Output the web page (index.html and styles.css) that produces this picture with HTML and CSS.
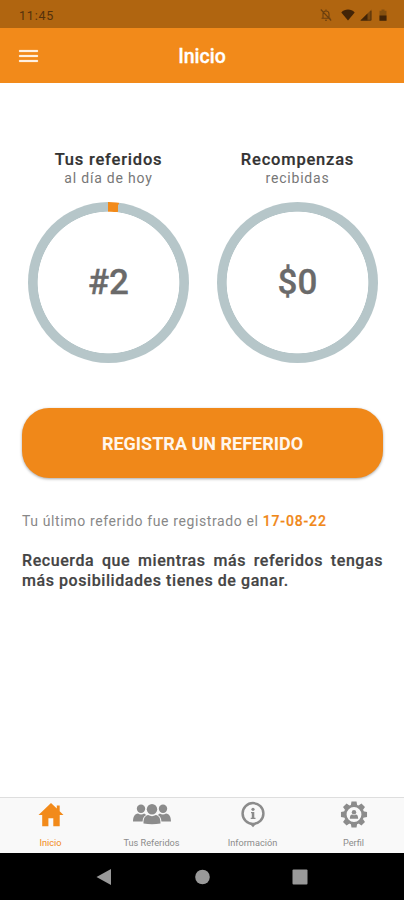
FILE: index.html
```html
<!DOCTYPE html>
<html lang="es">

<head>
    <meta charset="UTF-8">
    <meta name="viewport" content="width=device-width, initial-scale=1.0">
    <title>Inicio</title>
    <link rel="stylesheet" href="styles.css">
</head>

<body>
    <div class="app">
        <div class="status">
            <span class="time">11:45</span>
            <div class="status-icons">
                <svg width="12" height="14" viewBox="0 0 12 14" fill="none" stroke="#6b3f0e" stroke-width="1.1">
                    <path d="M3 10V6a3 3 0 0 1 6 0v4M1.5 10.2h9M5 12.3h2M6 3V1.5M.8 1.5l10.4 11" />
                </svg>
                <svg class="wifi" width="14" height="12" viewBox="0 0 14 12" fill="#422407">
                    <path d="M7 11.5L.3 3.4C2.200 1.500 4.400.6 7 .6s4.800.9 6.700 2.800z" />
                </svg>
                <svg class="signal" width="12" height="12" viewBox="0 0 12 12">
                    <path d="M.5 11.500L11.500.5v11z" fill="#7b480e" />
                    <path d="M.5 11.500L7.500 4.500v7z" fill="#422407" />
                    <path d="M10.900 2v9.200H.8" fill="none" stroke="#5a340b" />
                </svg>
                <svg class="battery" width="8" height="12" viewBox="0 0 8 12">
                    <path d="M2.500.5h3v1.200h2v10H.5v-10h2z" fill="#85500f" />
                    <path d="M.5 6.500h7v5.200h-7z" fill="#422407" />
                </svg>
            </div>
        </div>
        <header class="header">
            <div class="menu">
                <span></span>
                <span></span>
                <span></span>
            </div>
            <h1>Inicio</h1>
        </header>
        <main class="content">
            <div class="stats">
                <div class="stat">
                    <h2>Tus referidos</h2>
                    <p>al día de hoy</p>
                    <div class="ring ring-progress"><span>#2</span></div>
                </div>
                <div class="stat">
                    <h2>Recompenzas</h2>
                    <p>recibidas</p>
                    <div class="ring"><span>$0</span></div>
                </div>
            </div>
            <button class="register">REGISTRA UN REFERIDO</button>
            <p class="last">Tu último referido fue registrado el <b>17-08-22</b></p>
            <p class="note">Recuerda que mientras más referidos tengas más posibilidades tienes de ganar.</p>
        </main>
        <nav class="tabs">
            <a class="tab active">
                <svg width="26" height="28" viewBox="0 0 26 28" fill="currentColor">
                    <path d="M13 2L.5 14h3.700v11.300h6.200v-8h4.900v8h6.400V14h3.800l-3.800-3.700V4.500h-2.900v3z" />
                </svg>
                <span>Inicio</span>
            </a>
            <a class="tab">
                <svg width="40" height="28" viewBox="0 0 40 28" fill="currentColor">
                    <circle cx="9" cy="7.800" r="4.200" />
                    <circle cx="31" cy="7.800" r="4.200" />
                    <circle cx="20" cy="8.200" r="5.200" />
                    <path d="M1 20.500c.2-5 1.800-7.500 5-7.900 2 1.200 4.200 1.200 6.200 0l2 1.300c-2.400 1.300-3.400 3.300-3.600 6.600z" />
                    <path d="M39 20.500c-.2-5-1.800-7.500-5-7.900-2 1.200-4.200 1.200-6.200 0l-2 1.300c2.400 1.300 3.400 3.300 3.600 6.600z" />
                    <path d="M11.500 22.500c-.1-5 1.300-7.900 4.700-8.500 2.500 1.500 5.100 1.500 7.600 0 3.400.6 4.800 3.500 4.700 8.500q-8.500 1.600-17 0z" />
                </svg>
                <span>Tus Referidos</span>
            </a>
            <a class="tab">
                <svg width="26" height="28" viewBox="0 0 26 28" fill="currentColor">
                    <path d="M9.500 22.500l3.500 3.700 3.500-3.700z" />
                    <circle cx="13" cy="12.500" r="10.400" fill="none" stroke="currentColor" stroke-width="2.500" />
                    <circle cx="13" cy="8.300" r="1.600" />
                    <path d="M11 10.900h3.300v5.800h1.200v1.400h-4.800v-1.400h1.100v-4.400H11z" />
                </svg>
                <span>Información</span>
            </a>
            <a class="tab">
                <svg width="28" height="28" viewBox="-14.500 -14 29 29" fill="currentColor">
                    <g id="teeth">
                        <path d="M-3.300-9.500l.7-4h5.200l.7 4zM-3.300 9.500l.7 4h5.200l.7-4z" />
                        <path d="M-9.500-3.300l-4 .7v5.200l4 .7zM9.500-3.300l4 .7v5.200l-4 .7z" />
                    </g>
                    <use href="#teeth" transform="rotate(45)" />
                    <circle r="9.100" fill="none" stroke="currentColor" stroke-width="2.800" />
                    <circle cy="-2.300" r="2.300" />
                    <path d="M-4.300 4.400c0-3 .8-4.200 2.500-4.400Q0 1.500 1.800 0c1.700.2 2.500 1.400 2.500 4.400z" />
                </svg>
                <span>Perfil</span>
            </a>
        </nav>
        <div class="system">
            <svg width="16" height="18" viewBox="0 0 16 18">
                <path d="M.5 9L15 1v16z" />
            </svg>
            <svg width="16" height="18" viewBox="0 0 16 18">
                <circle cx="8.500" cy="9" r="7.300" />
            </svg>
            <svg width="16" height="18" viewBox="0 0 16 18">
                <rect x=".5" y="1.500" width="15" height="15" rx="1" />
            </svg>
        </div>
    </div>
</body>

</html>
```

FILE: styles.css
```css
* {
    margin: 0;
    padding: 0;
    box-sizing: border-box;
}

body {
    font-family: Roboto, "Liberation Sans", sans-serif;
    background-color: #fff;
}

.app {
    display: flex;
    flex-direction: column;
    height: 900px;
}

.status {
    display: flex;
    justify-content: space-between;
    align-items: center;
    height: 28px;
    padding: 1px 17px 0 19px;
    background-color: #b06510;
}

.time {
    padding-top: 2px;
    font-size: 12.5px;
    letter-spacing: 0.8px;
    color: #54310c;
}

.status-icons {
    display: flex;
    align-items: center;
}

.wifi {
    margin-left: 9px;
}

.signal {
    margin-left: 5px;
}

.battery {
    margin-left: 7px;
}

.header {
    display: grid;
    grid-template-columns: 38px 1fr 38px;
    align-items: center;
    height: 55px;
    padding-top: 2px;
    background-color: #f28a1a;
}

.menu {
    display: flex;
    flex-direction: column;
    gap: 3px;
    width: 19px;
    margin: -1px 0 0 19px;
}

.menu span {
    height: 2px;
    border-radius: 1px;
    background-color: #fff0e0;
    box-shadow: 0 0 1px #fff0e0;
}

.header h1 {
    padding-top: 1px;
    font-size: 19.5px;
    font-weight: 500;
    line-height: 22px;
    text-align: center;
    color: #fff;
    -webkit-text-stroke: 0.3px #fff;
}

.content {
    flex: 1;
    padding: 67px 21px 0 22px;
}

.stats {
    display: grid;
    grid-template-columns: 1fr 1fr;
    margin: 0 -9px 0 -8px;
    text-align: center;
}

.stat h2 {
    font-size: 16.5px;
    font-weight: 500;
    line-height: 20px;
    letter-spacing: 0.8px;
    color: #333;
    -webkit-text-stroke: 0.2px #333;
}

.stat p {
    font-size: 14px;
    line-height: 17px;
    letter-spacing: 0.8px;
    color: #777;
}

.ring {
    display: flex;
    justify-content: center;
    align-items: center;
    width: 161px;
    height: 161px;
    margin: 15px auto 0;
    border-radius: 50%;
    background: radial-gradient(circle, #fff 70.5px, transparent 71.2px), #b6c6c9;
}

.ring-progress {
    background: radial-gradient(circle, #fff 70.5px, transparent 71.2px), conic-gradient(#f28a1a 7.2deg, #b6c6c9 7.4deg);
}

.ring span {
    font-size: 35px;
    font-weight: 500;
    color: #6a6a6a;
    -webkit-text-stroke: 0.3px #6a6a6a;
}

.register {
    display: block;
    width: 100%;
    height: 70px;
    margin-top: 45px;
    border: none;
    border-radius: 27px;
    font-family: inherit;
    font-size: 18px;
    font-weight: 700;
    color: #fff6ec;
    background-color: #f08819;
    box-shadow: 0 1px 3px rgba(0, 0, 0, 0.35);
}

.last {
    margin-top: 33px;
    font-size: 14px;
    line-height: 20px;
    letter-spacing: 0.62px;
    color: #888;
}

.last b {
    font-weight: 500;
    letter-spacing: 0.85px;
    color: #f08819;
    -webkit-text-stroke: 0.2px #f08819;
}

.note {
    margin-top: 20px;
    font-size: 16px;
    font-weight: 500;
    line-height: 20px;
    letter-spacing: 0.57px;
    text-align: justify;
    color: #444;
    -webkit-text-stroke: 0.2px #444;
}

.tabs {
    display: grid;
    grid-template-columns: repeat(4, 1fr);
    height: 56px;
    border-top: 1px solid #dedede;
    background-color: #f9f9f9;
}

.tab {
    display: flex;
    flex-direction: column;
    align-items: center;
    padding-top: 3px;
    font-size: 9.2px;
    color: #8c8c8c;
}

.tab span {
    margin-top: 8px;
    line-height: 12px;
}

.tab.active {
    color: #f28a1a;
}

.system {
    display: flex;
    justify-content: center;
    align-items: center;
    gap: 82px;
    height: 47px;
    background-color: #000;
}

.system svg {
    fill: #999;
}
```
